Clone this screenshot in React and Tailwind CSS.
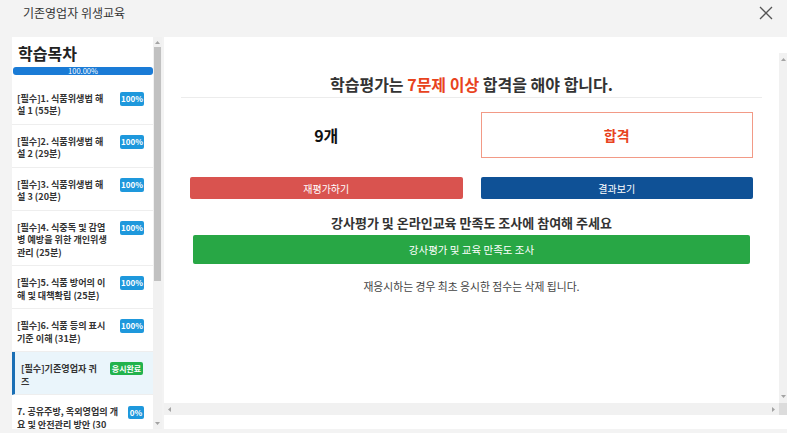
import React from 'react';

const items = [
  { lines: ['[필수]1. 식품위생법 해', '설 1 (55분)'], badge: '100%' },
  { lines: ['[필수]2. 식품위생법 해', '설 2 (29분)'], badge: '100%' },
  { lines: ['[필수]3. 식품위생법 해', '설 3 (20분)'], badge: '100%' },
  { lines: ['[필수]4. 식중독 및 감염', '병 예방을 위한 개인위생', '관리 (25분)'], badge: '100%' },
  { lines: ['[필수]5. 식품 방어의 이', '해 및 대책확립 (25분)'], badge: '100%' },
  { lines: ['[필수]6. 식품 등의 표시', '기준 이해 (31분)'], badge: '100%' },
  { lines: ['[필수]기존영업자 퀴', '즈'], badge: '응시완료', active: true },
  { lines: ['7. 공유주방, 옥외영업의 개', '요 및 안전관리 방안 (30'], badge: '0%' },
];

// tiny scrollbar arrow
const Arrow = ({ dir }) => {
  const pts = {
    up: '0,4 2.5,1 5,4',
    down: '0,1 2.5,4 5,1',
    left: '4,0 1,2.5 4,5',
    right: '1,0 4,2.5 1,5',
  }[dir];
  return (
    <svg width="5" height="5" viewBox="0 0 5 5" className="block">
      <polygon points={pts} fill="#a3a3a3" />
    </svg>
  );
};

const Badge = ({ label }) => {
  if (label === '응시완료') {
    return (
      <span className="mt-[0px] shrink-0 h-[13px] w-[33px] flex items-center justify-center rounded-[2px] bg-[#22b24c] text-white text-[8px] font-bold leading-none">
        {label}
      </span>
    );
  }
  if (label === '0%') {
    return (
      <span className="mt-[1px] shrink-0 h-[13px] w-[16px] flex items-center justify-center rounded-[2px] bg-[#1e98dc] text-white text-[8px] font-bold leading-none">
        {label}
      </span>
    );
  }
  return (
    <span className="mt-[0px] shrink-0 h-[14px] w-[24px] flex items-center justify-center rounded-[2px] bg-[#1e98dc] text-white text-[8px] font-bold leading-none">
      {label}
    </span>
  );
};

const Sidebar = () => (
  <div className="w-[150px] flex bg-white">
    <div className="w-[141px] flex flex-col overflow-hidden">
      <div className="pl-[6px] pt-[6px] h-[26px] text-[16px] leading-[20px] font-bold text-[#222]">학습목차</div>
      <div className="ml-[1px] mt-[4px] mb-[7px] h-[10px] rounded-[3px] bg-[#1a7bd6] flex items-center justify-center text-white text-[7.5px] leading-none">
        100.00%
      </div>
      {items.map((it, idx) => (
        <div
          key={idx}
          className={
            it.active
              ? 'shrink-0 flex items-start justify-between pl-[6px] pr-[10px] pt-[10px] pb-[7px] border-l-[3px] border-[#1a6fb5] bg-[#eaf5fb] border-b border-b-[#eeeeee]'
              : 'shrink-0 flex items-start justify-between pl-[5px] pr-[9px] pt-[10px] pb-[7px] border-b border-[#eeeeee]'
          }
        >
          <div className="text-[9.1px] leading-[12.5px] font-bold text-[#333] whitespace-nowrap">
            {it.lines.map((l, i) => (
              <div key={i}>{l}</div>
            ))}
          </div>
          <Badge label={it.badge} />
        </div>
      ))}
    </div>
    <div className="w-[9px] bg-[#f1f1f1] flex flex-col items-center">
      <div className="h-[10px] flex items-center justify-center">
        <Arrow dir="up" />
      </div>
      <div className="w-[7px] h-[234px] bg-[#c1c1c1]" />
      <div className="flex-1" />
      <div className="h-[12px] flex items-center justify-center">
        <Arrow dir="down" />
      </div>
    </div>
  </div>
);

const Main = () => (
  <div className="flex-1 flex flex-col">
    <div className="flex-1 bg-white flex min-h-0">
      <div className="flex-1 px-[17px] pt-[37px] text-[#333]">
        <div className="text-center text-[16px] leading-[21px] font-bold text-[#333]">
          학습평가는 <span className="text-[#e8431d]">7문제 이상</span> 합격을 해야 합니다.
        </div>
        <div className="mt-[2px] border-t border-[#ececec]" />
        <div className="mt-[14px] grid grid-cols-2">
          <div className="flex items-center justify-center text-[16px] font-bold text-[#111]">9개</div>
          <div className="px-[9px]">
            <div className="h-[46px] border border-[#f29a86] flex items-center justify-center text-[14px] font-bold text-[#e8431d]">
              합격
            </div>
          </div>
        </div>
        <div className="mt-[19px] grid grid-cols-2">
          <div className="px-[9px]">
            <div className="h-[22px] rounded-[2px] bg-[#d9534f] flex items-center justify-center text-white text-[10px]">
              재평가하기
            </div>
          </div>
          <div className="px-[9px]">
            <div className="h-[22px] rounded-[2px] bg-[#0f5196] flex items-center justify-center text-white text-[10px]">
              결과보기
            </div>
          </div>
        </div>
        <div className="mt-[15px] text-center text-[13px] leading-[18px] font-bold text-[#333]">
          강사평가 및 온라인교육 만족도 조사에 참여해 주세요
        </div>
        <div className="mt-[3px] mx-[12px] h-[29px] rounded-[2px] bg-[#28a745] flex items-center justify-center text-white text-[10.5px]">
          강사평가 및 교육 만족도 조사
        </div>
        <div className="mt-[15px] text-center text-[10.8px] leading-[14px] text-[#444]">
          재응시하는 경우 최초 응시한 점수는 삭제 됩니다.
        </div>
      </div>
      <div className="w-[8px] mt-[16px] bg-[#f1f1f1] flex flex-col items-center justify-between py-[4px]">
        <Arrow dir="up" />
        <Arrow dir="down" />
      </div>
    </div>
    <div className="h-[12px] flex">
      <div className="flex-1 bg-[#f1f1f1] flex items-center justify-between px-[3px]">
        <Arrow dir="left" />
        <Arrow dir="right" />
      </div>
      <div className="w-[8px] bg-[#dcdcdc]" />
    </div>
    <div className="h-[14px] bg-white" />
  </div>
);

export default function App() {
  return (
    <div className="w-[787px] h-[433px] bg-[#f3f3f3] flex flex-col overflow-hidden font-['Noto_Sans_CJK_KR','Noto_Sans',sans-serif]">
      <div className="h-[37px] shrink-0 flex items-center justify-between pl-[23px] pr-[14px]">
        <span className="text-[12px] text-[#333] mt-[-12px]">기존영업자 위생교육</span>
        <svg width="14" height="14" viewBox="0 0 14 14" className="mt-[-12px]">
          <path d="M1 1 L13 13 M13 1 L1 13" stroke="#555" strokeWidth="1.3" fill="none" />
        </svg>
      </div>
      <div className="flex-1 flex pl-[12px] pb-[4px] gap-[2px] min-h-0">
        <Sidebar />
        <Main />
      </div>
    </div>
  );
}
